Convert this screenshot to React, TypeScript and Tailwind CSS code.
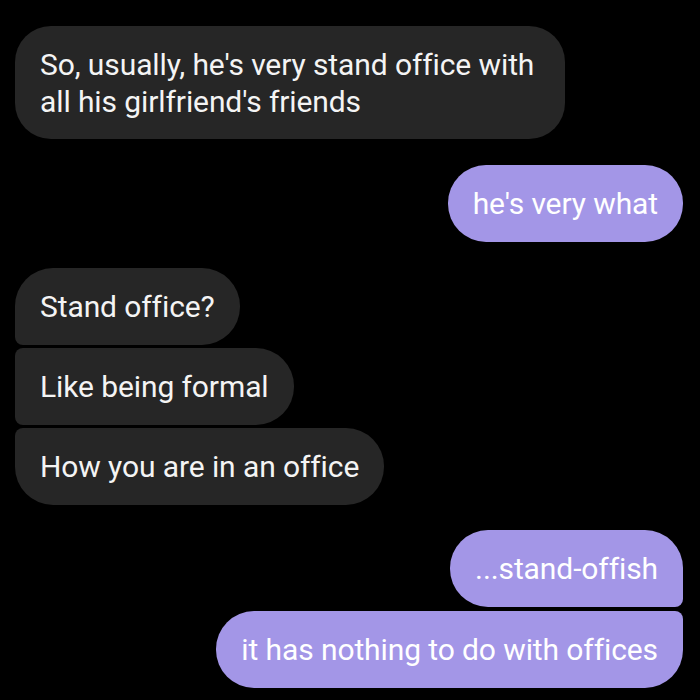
import React from "react";

const dark = "bg-[#262626] text-[#f4f4f4]";
const purple = "bg-[#a396e7] text-white";

function Bubble({
  children,
  className,
}: {
  children: React.ReactNode;
  className: string;
}) {
  return (
    <div
      className={`px-[25px] text-[30px] leading-[37px] tracking-[-0.1px] whitespace-nowrap ${className}`}
    >
      {children}
    </div>
  );
}

export default function App() {
  return (
    <div
      className="w-[700px] h-[700px] bg-black overflow-hidden flex flex-col gap-[26px] pt-[26px] pl-[15px] pr-[17px]"
      style={{ fontFamily: "Roboto, 'Noto Sans', sans-serif" }}
    >
      <div className="flex justify-start">
        <Bubble className={`${dark} w-[550px] py-[19.5px] rounded-[36px] whitespace-normal`}>
          So, usually, he's very stand office with
          <br />
          all his girlfriend's friends
        </Bubble>
      </div>
      <div className="flex justify-end">
        <Bubble className={`${purple} py-[20px] rounded-[38px]`}>he's very what</Bubble>
      </div>
      <div className="flex flex-col items-start gap-[3px]">
        <Bubble className={`${dark} py-[20px] rounded-[38px] rounded-bl-[8px]`}>Stand office?</Bubble>
        <Bubble className={`${dark} py-[20px] rounded-[38px] rounded-tl-[8px] rounded-bl-[8px]`}>
          Like being formal
        </Bubble>
        <Bubble className={`${dark} py-[20px] rounded-[38px] rounded-tl-[8px]`}>
          How you are in an office
        </Bubble>
      </div>
      <div className="-mt-[1px] flex flex-col items-end gap-[4px]">
        <Bubble className={`${purple} py-[20px] rounded-[38px] rounded-br-[8px]`}>...stand-offish</Bubble>
        <Bubble className={`${purple} py-[20px] rounded-[38px] rounded-tr-[8px]`}>
          it has nothing to do with offices
        </Bubble>
      </div>
    </div>
  );
}
